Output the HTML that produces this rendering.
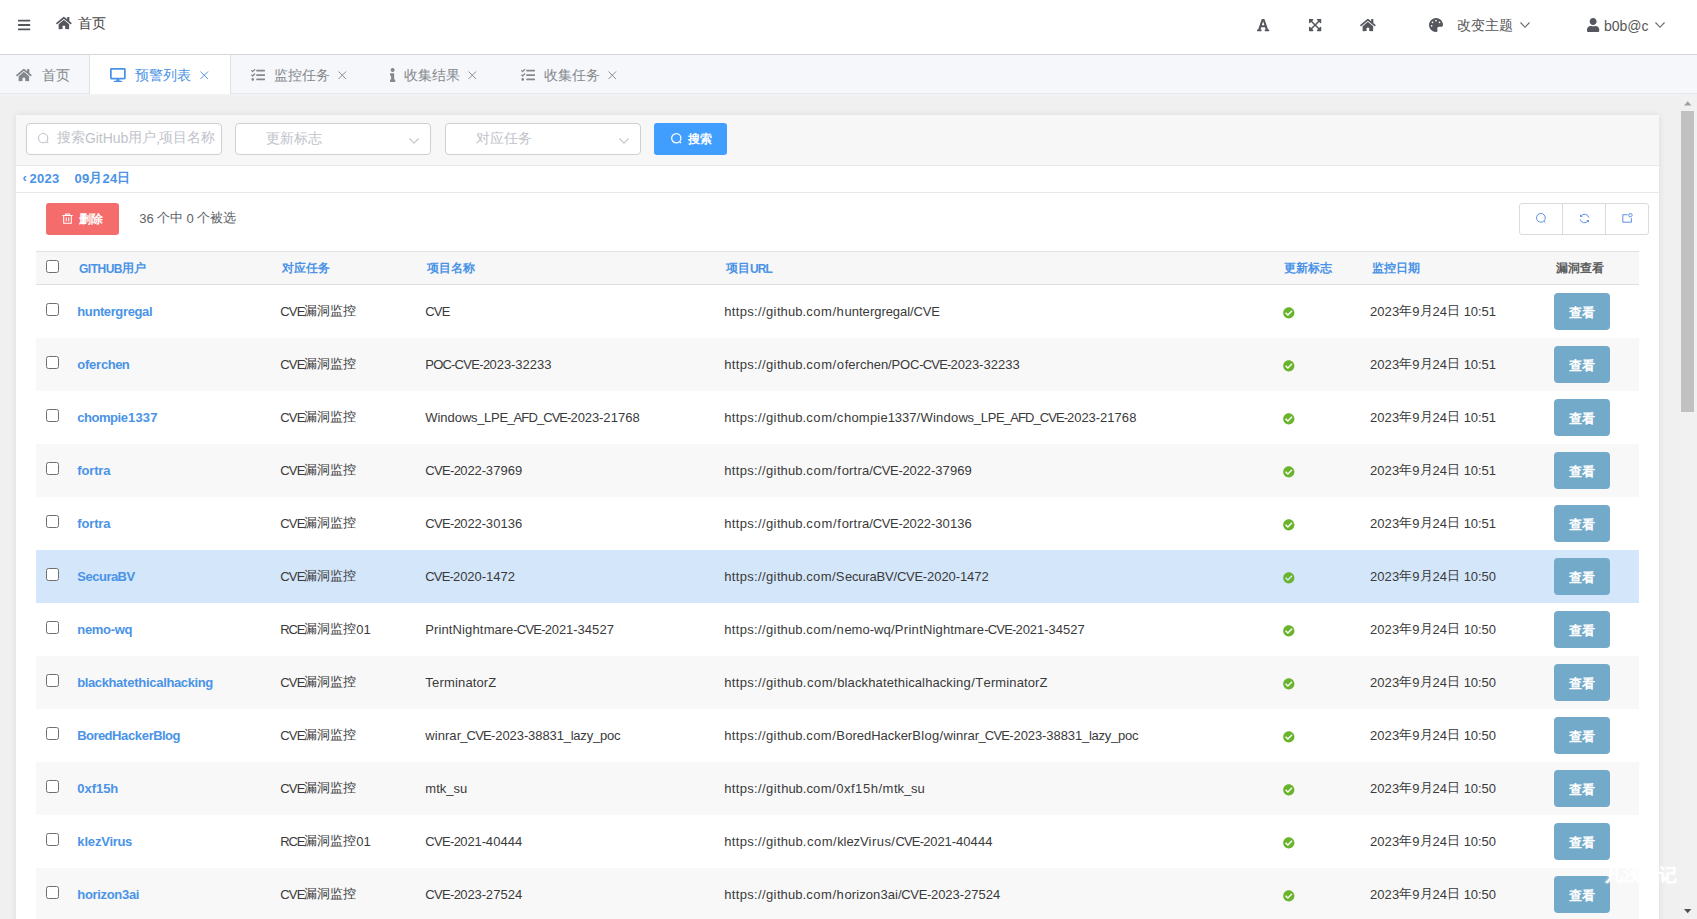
<!DOCTYPE html>
<html lang="zh">
<head>
<meta charset="utf-8">
<title>预警列表</title>
<style>
*{box-sizing:border-box;margin:0;padding:0}
html,body{width:1697px;height:919px;overflow:hidden}
body{font-family:"Liberation Sans",sans-serif;background:#f0f0f0;color:#333;position:relative;font-size:13px}
svg{display:block;overflow:visible}
.abs{position:absolute}
.t{position:absolute;line-height:16px;white-space:pre}
.t i{font-style:normal}
.t b{position:relative;top:-.85px;font-weight:inherit}
#hdr{position:absolute;left:0;top:0;width:1697px;height:55px;background:#fff;border-bottom:1px solid #d6d7da}
#tabs{position:absolute;left:0;top:55px;width:1697px;height:39px;background:#f5f7fa;border-bottom:1px solid #e4e7ed}
#tabs .act{position:absolute;left:89px;top:0;width:142px;height:39px;background:#fff;border-left:1px solid #dfe1e5;border-right:1px solid #dfe1e5}
#shade{position:absolute;left:0;top:94px;width:1680px;height:3px;background:linear-gradient(#f2f3f4,#f0f0f0)}
#sb{position:absolute;left:1680px;top:94px;width:17px;height:825px;background:#f1f1f1}
#sb .th{position:absolute;left:1px;top:17px;width:13px;height:301px;background:#c1c1c1}
#panel{position:absolute;left:16px;top:115px;width:1643px;height:820px;background:#fff;box-shadow:0 0 7px rgba(0,0,0,.09)}
#flt{position:absolute;left:16px;top:115px;width:1643px;height:51px;background:#f7f7f7;border-bottom:1px solid #e8e8e8}
.inp{position:absolute;top:123px;height:32px;width:196px;background:#fff;border:1px solid #cfcfcf;border-radius:4px}
#sbtn{position:absolute;left:654px;top:123px;width:73px;height:32px;border-radius:3px;background:#409eff}
#dline{position:absolute;left:16px;top:192px;width:1643px;height:1px;background:#e8e8e8}
#del{position:absolute;left:46px;top:203px;width:73px;height:32px;border-radius:3px;background:#f56c6c}
#grp{position:absolute;left:1519px;top:203px;width:130px;height:32px;border:1px solid #dbdbdb;border-radius:3px;background:#fff}
#grp i{position:absolute;top:0;width:1px;height:30px;background:#dbdbdb}
#th{position:absolute;left:36px;top:251px;width:1603px;height:34px;background:#f7f7f7;border-top:1px solid #e2e2e2;border-bottom:1px solid #dedede}
.rw{position:absolute;left:36px;width:1603px;height:53px}
.rw.odd{background:#f8f8f8}
.rw.sel{background:#d4e6f9}
.cb{position:absolute;left:46px;width:13px;height:13px;border:1px solid #6f6f6f;border-radius:2.5px;background:#fff}
.vb{position:absolute;left:1554px;width:56px;height:37px;border-radius:4px;background:#74aac9}
</style>
</head>
<body>
<div id="hdr"></div>
<div id="tabs"><div class="act"></div></div>
<div id="shade"></div>
<div id="panel"></div>
<div id="flt"></div>
<div class="inp" style="left:26px"></div><div class="inp" style="left:235px"></div><div class="inp" style="left:445px"></div>
<div id="sbtn"></div>
<div id="dline"></div>
<div id="del"></div>
<div id="grp"><i style="left:42px"></i><i style="left:85px"></i></div>
<div id="th"></div>
<div class="cb" style="top:260px"></div>
<div id="sb"><div class="th"></div></div>
<div class="rw" style="top:285px"></div>
<div class="cb" style="top:303px"></div>
<svg class="abs" style="left:1282.7px;top:306.7px" width="11.60" height="11.6" viewBox="0 0 512 512"><path fill="#6ab42d" d="M504 256c0 136.967-111.033 248-248 248S8 392.967 8 256 119.033 8 256 8s248 111.033 248 248zM227.314 387.314l184-184c6.248-6.248 6.248-16.379 0-22.627l-22.627-22.627c-6.248-6.249-16.379-6.249-22.628 0L216 308.118l-70.059-70.059c-6.248-6.248-16.379-6.248-22.628 0l-22.627 22.627c-6.248 6.248-6.248 16.379 0 22.627l104 104c6.249 6.249 16.379 6.249 22.628.001z"/></svg>
<div class="vb" style="top:293px"></div>
<div class="rw odd" style="top:338px"></div>
<div class="cb" style="top:356px"></div>
<svg class="abs" style="left:1282.7px;top:359.7px" width="11.60" height="11.6" viewBox="0 0 512 512"><path fill="#6ab42d" d="M504 256c0 136.967-111.033 248-248 248S8 392.967 8 256 119.033 8 256 8s248 111.033 248 248zM227.314 387.314l184-184c6.248-6.248 6.248-16.379 0-22.627l-22.627-22.627c-6.248-6.249-16.379-6.249-22.628 0L216 308.118l-70.059-70.059c-6.248-6.248-16.379-6.248-22.628 0l-22.627 22.627c-6.248 6.248-6.248 16.379 0 22.627l104 104c6.249 6.249 16.379 6.249 22.628.001z"/></svg>
<div class="vb" style="top:346px"></div>
<div class="rw" style="top:391px"></div>
<div class="cb" style="top:409px"></div>
<svg class="abs" style="left:1282.7px;top:412.7px" width="11.60" height="11.6" viewBox="0 0 512 512"><path fill="#6ab42d" d="M504 256c0 136.967-111.033 248-248 248S8 392.967 8 256 119.033 8 256 8s248 111.033 248 248zM227.314 387.314l184-184c6.248-6.248 6.248-16.379 0-22.627l-22.627-22.627c-6.248-6.249-16.379-6.249-22.628 0L216 308.118l-70.059-70.059c-6.248-6.248-16.379-6.248-22.628 0l-22.627 22.627c-6.248 6.248-6.248 16.379 0 22.627l104 104c6.249 6.249 16.379 6.249 22.628.001z"/></svg>
<div class="vb" style="top:399px"></div>
<div class="rw odd" style="top:444px"></div>
<div class="cb" style="top:462px"></div>
<svg class="abs" style="left:1282.7px;top:465.7px" width="11.60" height="11.6" viewBox="0 0 512 512"><path fill="#6ab42d" d="M504 256c0 136.967-111.033 248-248 248S8 392.967 8 256 119.033 8 256 8s248 111.033 248 248zM227.314 387.314l184-184c6.248-6.248 6.248-16.379 0-22.627l-22.627-22.627c-6.248-6.249-16.379-6.249-22.628 0L216 308.118l-70.059-70.059c-6.248-6.248-16.379-6.248-22.628 0l-22.627 22.627c-6.248 6.248-6.248 16.379 0 22.627l104 104c6.249 6.249 16.379 6.249 22.628.001z"/></svg>
<div class="vb" style="top:452px"></div>
<div class="rw" style="top:497px"></div>
<div class="cb" style="top:515px"></div>
<svg class="abs" style="left:1282.7px;top:518.7px" width="11.60" height="11.6" viewBox="0 0 512 512"><path fill="#6ab42d" d="M504 256c0 136.967-111.033 248-248 248S8 392.967 8 256 119.033 8 256 8s248 111.033 248 248zM227.314 387.314l184-184c6.248-6.248 6.248-16.379 0-22.627l-22.627-22.627c-6.248-6.249-16.379-6.249-22.628 0L216 308.118l-70.059-70.059c-6.248-6.248-16.379-6.248-22.628 0l-22.627 22.627c-6.248 6.248-6.248 16.379 0 22.627l104 104c6.249 6.249 16.379 6.249 22.628.001z"/></svg>
<div class="vb" style="top:505px"></div>
<div class="rw sel" style="top:550px"></div>
<div class="cb" style="top:568px"></div>
<svg class="abs" style="left:1282.7px;top:571.7px" width="11.60" height="11.6" viewBox="0 0 512 512"><path fill="#6ab42d" d="M504 256c0 136.967-111.033 248-248 248S8 392.967 8 256 119.033 8 256 8s248 111.033 248 248zM227.314 387.314l184-184c6.248-6.248 6.248-16.379 0-22.627l-22.627-22.627c-6.248-6.249-16.379-6.249-22.628 0L216 308.118l-70.059-70.059c-6.248-6.248-16.379-6.248-22.628 0l-22.627 22.627c-6.248 6.248-6.248 16.379 0 22.627l104 104c6.249 6.249 16.379 6.249 22.628.001z"/></svg>
<div class="vb" style="top:558px"></div>
<div class="rw" style="top:603px"></div>
<div class="cb" style="top:621px"></div>
<svg class="abs" style="left:1282.7px;top:624.7px" width="11.60" height="11.6" viewBox="0 0 512 512"><path fill="#6ab42d" d="M504 256c0 136.967-111.033 248-248 248S8 392.967 8 256 119.033 8 256 8s248 111.033 248 248zM227.314 387.314l184-184c6.248-6.248 6.248-16.379 0-22.627l-22.627-22.627c-6.248-6.249-16.379-6.249-22.628 0L216 308.118l-70.059-70.059c-6.248-6.248-16.379-6.248-22.628 0l-22.627 22.627c-6.248 6.248-6.248 16.379 0 22.627l104 104c6.249 6.249 16.379 6.249 22.628.001z"/></svg>
<div class="vb" style="top:611px"></div>
<div class="rw odd" style="top:656px"></div>
<div class="cb" style="top:674px"></div>
<svg class="abs" style="left:1282.7px;top:677.7px" width="11.60" height="11.6" viewBox="0 0 512 512"><path fill="#6ab42d" d="M504 256c0 136.967-111.033 248-248 248S8 392.967 8 256 119.033 8 256 8s248 111.033 248 248zM227.314 387.314l184-184c6.248-6.248 6.248-16.379 0-22.627l-22.627-22.627c-6.248-6.249-16.379-6.249-22.628 0L216 308.118l-70.059-70.059c-6.248-6.248-16.379-6.248-22.628 0l-22.627 22.627c-6.248 6.248-6.248 16.379 0 22.627l104 104c6.249 6.249 16.379 6.249 22.628.001z"/></svg>
<div class="vb" style="top:664px"></div>
<div class="rw" style="top:709px"></div>
<div class="cb" style="top:727px"></div>
<svg class="abs" style="left:1282.7px;top:730.7px" width="11.60" height="11.6" viewBox="0 0 512 512"><path fill="#6ab42d" d="M504 256c0 136.967-111.033 248-248 248S8 392.967 8 256 119.033 8 256 8s248 111.033 248 248zM227.314 387.314l184-184c6.248-6.248 6.248-16.379 0-22.627l-22.627-22.627c-6.248-6.249-16.379-6.249-22.628 0L216 308.118l-70.059-70.059c-6.248-6.248-16.379-6.248-22.628 0l-22.627 22.627c-6.248 6.248-6.248 16.379 0 22.627l104 104c6.249 6.249 16.379 6.249 22.628.001z"/></svg>
<div class="vb" style="top:717px"></div>
<div class="rw odd" style="top:762px"></div>
<div class="cb" style="top:780px"></div>
<svg class="abs" style="left:1282.7px;top:783.7px" width="11.60" height="11.6" viewBox="0 0 512 512"><path fill="#6ab42d" d="M504 256c0 136.967-111.033 248-248 248S8 392.967 8 256 119.033 8 256 8s248 111.033 248 248zM227.314 387.314l184-184c6.248-6.248 6.248-16.379 0-22.627l-22.627-22.627c-6.248-6.249-16.379-6.249-22.628 0L216 308.118l-70.059-70.059c-6.248-6.248-16.379-6.248-22.628 0l-22.627 22.627c-6.248 6.248-6.248 16.379 0 22.627l104 104c6.249 6.249 16.379 6.249 22.628.001z"/></svg>
<div class="vb" style="top:770px"></div>
<div class="rw" style="top:815px"></div>
<div class="cb" style="top:833px"></div>
<svg class="abs" style="left:1282.7px;top:836.7px" width="11.60" height="11.6" viewBox="0 0 512 512"><path fill="#6ab42d" d="M504 256c0 136.967-111.033 248-248 248S8 392.967 8 256 119.033 8 256 8s248 111.033 248 248zM227.314 387.314l184-184c6.248-6.248 6.248-16.379 0-22.627l-22.627-22.627c-6.248-6.249-16.379-6.249-22.628 0L216 308.118l-70.059-70.059c-6.248-6.248-16.379-6.248-22.628 0l-22.627 22.627c-6.248 6.248-6.248 16.379 0 22.627l104 104c6.249 6.249 16.379 6.249 22.628.001z"/></svg>
<div class="vb" style="top:823px"></div>
<div class="rw odd" style="top:868px"></div>
<div class="cb" style="top:886px"></div>
<svg class="abs" style="left:1282.7px;top:889.7px" width="11.60" height="11.6" viewBox="0 0 512 512"><path fill="#6ab42d" d="M504 256c0 136.967-111.033 248-248 248S8 392.967 8 256 119.033 8 256 8s248 111.033 248 248zM227.314 387.314l184-184c6.248-6.248 6.248-16.379 0-22.627l-22.627-22.627c-6.248-6.249-16.379-6.249-22.628 0L216 308.118l-70.059-70.059c-6.248-6.248-16.379-6.248-22.628 0l-22.627 22.627c-6.248 6.248-6.248 16.379 0 22.627l104 104c6.249 6.249 16.379 6.249 22.628.001z"/></svg>
<div class="vb" style="top:876px"></div>
<svg class="abs" style="left:17.8px;top:18px" width="12.25" height="14" viewBox="0 0 448 512"><path fill="#54575d" d="M16 132h416c8.837 0 16-7.163 16-16V76c0-8.837-7.163-16-16-16H16C7.163 60 0 67.163 0 76v40c0 8.837 7.163 16 16 16zm0 160h416c8.837 0 16-7.163 16-16v-40c0-8.837-7.163-16-16-16H16c-8.837 0-16 7.163-16 16v40c0 8.837 7.163 16 16 16zm0 160h416c8.837 0 16-7.163 16-16v-40c0-8.837-7.163-16-16-16H16c-8.837 0-16 7.163-16 16v40c0 8.837 7.163 16 16 16z"/></svg>
<svg class="abs" style="left:56.2px;top:15.5px" width="15.75" height="14" viewBox="0 0 576 512"><path fill="#54575d" d="M280.37 148.26L96 300.11V464a16 16 0 0 0 16 16l112.06-.29a16 16 0 0 0 15.92-16V368a16 16 0 0 1 16-16h64a16 16 0 0 1 16 16v95.64a16 16 0 0 0 16 16.05L464 480a16 16 0 0 0 16-16V300L295.67 148.26a12.19 12.19 0 0 0-15.3 0zM571.6 251.47L488 182.56V44.05a12 12 0 0 0-12-12h-56a12 12 0 0 0-12 12v72.61L318.47 43a48 48 0 0 0-61 0L4.34 251.47a12 12 0 0 0-1.6 16.9l25.5 31A12 12 0 0 0 45.15 301l235.22-193.74a12.19 12.19 0 0 1 15.3 0L530.9 301a12 12 0 0 0 16.9-1.6l25.5-31a12 12 0 0 0-1.7-16.93z"/></svg>
<svg class="abs" style="left:1257.4px;top:18px" width="12.25" height="14" viewBox="0 0 448 512"><path fill="#54575d" d="M152 416h-24.013l26.586-80.782H292.800L319.386 416H296c-8.837 0-16 7.163-16 16v32c0 8.837 7.163 16 16 16h136c8.837 0 16-7.163 16-16v-32c0-8.837-7.163-16-16-16h-26.739L275.495 42.746A16 16 0 0 0 260.382 32h-72.766a16 16 0 0 0-15.113 10.746L42.739 416H16c-8.837 0-16 7.163-16 16v32c0 8.837 7.163 16 16 16h136c8.837 0 16-7.163 16-16v-32c0-8.837-7.163-16-16-16zm64.353-271.778c4.348-15.216 6.610-28.156 7.586-34.644.839 6.521 2.939 19.476 7.727 34.706l41.335 124.006h-98.619l41.971-124.068z"/></svg>
<svg class="abs" style="left:1309px;top:18px" width="12.25" height="14" viewBox="0 0 448 512"><path fill="#54575d" d="M448 344v112a23.940 23.940 0 0 1-24 24H312c-21.390 0-32.090-25.900-17-41l36.200-36.200L224 295.600 116.770 402.900 153 439c15.090 15.100 4.390 41-17 41H24a23.940 23.940 0 0 1-24-24V344c0-21.400 25.890-32.100 41-17l36.190 36.200L184.460 256 77.180 148.700 41 185c-15.100 15.100-41 4.400-41-17V56a23.940 23.940 0 0 1 24-24h112c21.390 0 32.090 25.900 17 41l-36.200 36.200L224 216.400l107.230-107.300L295 73c-15.090-15.100-4.390-41 17-41h112a23.940 23.940 0 0 1 24 24v112c0 21.400-25.890 32.100-41 17l-36.190-36.200L263.540 256l107.280 107.300L407 327.100c15.100-15.200 41-4.500 41 16.900z"/></svg>
<svg class="abs" style="left:1359.7px;top:18px" width="15.75" height="14" viewBox="0 0 576 512"><path fill="#54575d" d="M280.37 148.26L96 300.11V464a16 16 0 0 0 16 16l112.06-.29a16 16 0 0 0 15.92-16V368a16 16 0 0 1 16-16h64a16 16 0 0 1 16 16v95.64a16 16 0 0 0 16 16.05L464 480a16 16 0 0 0 16-16V300L295.67 148.26a12.19 12.19 0 0 0-15.3 0zM571.6 251.47L488 182.56V44.05a12 12 0 0 0-12-12h-56a12 12 0 0 0-12 12v72.61L318.47 43a48 48 0 0 0-61 0L4.34 251.47a12 12 0 0 0-1.6 16.9l25.5 31A12 12 0 0 0 45.15 301l235.22-193.74a12.19 12.19 0 0 1 15.3 0L530.9 301a12 12 0 0 0 16.9-1.6l25.5-31a12 12 0 0 0-1.7-16.93z"/></svg>
<svg class="abs" style="left:1429px;top:18px" width="14.00" height="14" viewBox="0 0 512 512"><path fill="#54575d" d="M204.3 5C104.9 24.4 24.8 104.3 5.2 203.4c-37 187 131.7 326.4 258.8 306.7 41.2-6.4 61.4-54.6 42.5-91.7-23.1-45.4 9.9-98.4 60.9-98.4h79.700c35.800 0 64.800-29.600 64.900-65.300C511.500 97.100 368.100-26.900 204.300 5zM96 320c-17.700 0-32-14.300-32-32s14.300-32 32-32 32 14.300 32 32-14.300 32-32 32zm32-128c-17.700 0-32-14.300-32-32s14.300-32 32-32 32 14.300 32 32-14.300 32-32 32zm128-64c-17.700 0-32-14.300-32-32s14.300-32 32-32 32 14.300 32 32-14.300 32-32 32zm128 64c-17.700 0-32-14.300-32-32s14.300-32 32-32 32 14.300 32 32-14.300 32-32 32z"/></svg>
<svg class="abs" style="left:1586.7px;top:18px" width="12.25" height="14" viewBox="0 0 448 512"><path fill="#54575d" d="M224 256c70.7 0 128-57.3 128-128S294.7 0 224 0 96 57.3 96 128s57.3 128 128 128zm89.6 32h-16.7c-22.2 10.2-46.9 16-72.9 16s-50.6-5.8-72.9-16h-16.7C60.2 288 0 348.2 0 422.4V464c0 26.5 21.5 48 48 48h352c26.5 0 48-21.5 48-48v-41.6c0-74.2-60.2-134.4-134.4-134.4z"/></svg>
<svg class="abs" style="left:1520.3px;top:22px" width="10" height="6" viewBox="0 0 10 6"><path d="M0.5 0.5L5.0 5.3L9.5 0.5" fill="none" stroke="#666" stroke-width="1.1"/></svg>
<svg class="abs" style="left:1655.2px;top:22px" width="10" height="6" viewBox="0 0 10 6"><path d="M0.5 0.5L5.0 5.3L9.5 0.5" fill="none" stroke="#666" stroke-width="1.1"/></svg>
<svg class="abs" style="left:16.2px;top:67.8px" width="15.75" height="14" viewBox="0 0 576 512"><path fill="#84878c" d="M280.37 148.26L96 300.11V464a16 16 0 0 0 16 16l112.06-.29a16 16 0 0 0 15.92-16V368a16 16 0 0 1 16-16h64a16 16 0 0 1 16 16v95.64a16 16 0 0 0 16 16.05L464 480a16 16 0 0 0 16-16V300L295.67 148.26a12.19 12.19 0 0 0-15.3 0zM571.6 251.47L488 182.56V44.05a12 12 0 0 0-12-12h-56a12 12 0 0 0-12 12v72.61L318.47 43a48 48 0 0 0-61 0L4.34 251.47a12 12 0 0 0-1.6 16.9l25.5 31A12 12 0 0 0 45.15 301l235.22-193.74a12.19 12.19 0 0 1 15.3 0L530.9 301a12 12 0 0 0 16.9-1.6l25.5-31a12 12 0 0 0-1.7-16.93z"/></svg>
<svg class="abs" style="left:110.2px;top:67.8px" width="15.75" height="14" viewBox="0 0 576 512"><path fill="#4a93e6" d="M528 0H48C21.5 0 0 21.5 0 48v320c0 26.5 21.5 48 48 48h192l-16 48h-72c-13.3 0-24 10.7-24 24s10.7 24 24 24h272c13.3 0 24-10.7 24-24s-10.7-24-24-24h-72l-16-48h192c26.5 0 48-21.5 48-48V48c0-26.5-21.5-48-48-48zm-16 352H64V64h448v288z"/></svg>
<svg class="abs" style="left:199.5px;top:70.5px" width="8.5" height="8.5" viewBox="0 0 8.5 8.5"><path d="M0.5 0.5L8.0 8.0M8.0 0.5L0.5 8.0" fill="none" stroke="#4a93e6" stroke-width="0.95"/></svg>
<svg class="abs" style="left:251px;top:67.8px" width="14.00" height="14" viewBox="0 0 512 512"><path fill="#84878c" d="M139.61 35.5a12 12 0 0 0-17 0L58.930 98.810l-22.700-22.120a12 12 0 0 0-17 0L3.530 92.410a12 12 0 0 0 0 17l47.590 47.400a12.780 12.780 0 0 0 17.610 0l15.590-15.620L156.520 69a12.090 12.090 0 0 0 .09-17zm0 159.190a12 12 0 0 0-17 0l-63.680 63.720-22.700-22.100a12 12 0 0 0-17 0L3.530 252a12 12 0 0 0 0 17L51 316.500a12.770 12.770 0 0 0 17.600 0l15.700-15.690 72.200-72.220a12 12 0 0 0 .09-16.900zM64 368c-26.490 0-48.590 21.500-48.590 48S37.530 464 64 464a48 48 0 0 0 0-96zm432 16H208a16 16 0 0 0-16 16v32a16 16 0 0 0 16 16h288a16 16 0 0 0 16-16v-32a16 16 0 0 0-16-16zm0-320H208a16 16 0 0 0-16 16v32a16 16 0 0 0 16 16h288a16 16 0 0 0 16-16V80a16 16 0 0 0-16-16zm0 160H208a16 16 0 0 0-16 16v32a16 16 0 0 0 16 16h288a16 16 0 0 0 16-16v-32a16 16 0 0 0-16-16z"/></svg>
<svg class="abs" style="left:337.5px;top:70.5px" width="8.5" height="8.5" viewBox="0 0 8.5 8.5"><path d="M0.5 0.5L8.0 8.0M8.0 0.5L0.5 8.0" fill="none" stroke="#84878c" stroke-width="0.95"/></svg>
<svg class="abs" style="left:389.5px;top:67.8px" width="5.25" height="14" viewBox="0 0 192 512"><path fill="#84878c" d="M20 424.229h20V279.771H20c-11.046 0-20-8.954-20-20V212c0-11.046 8.954-20 20-20h112c11.046 0 20 8.954 20 20v212.229h20c11.046 0 20 8.954 20 20V492c0 11.046-8.954 20-20 20H20c-11.046 0-20-8.954-20-20v-47.771c0-11.046 8.954-20 20-20zM96 0C56.235 0 24 32.235 24 72s32.235 72 72 72 72-32.235 72-72S135.764 0 96 0z"/></svg>
<svg class="abs" style="left:467.5px;top:70.5px" width="8.5" height="8.5" viewBox="0 0 8.5 8.5"><path d="M0.5 0.5L8.0 8.0M8.0 0.5L0.5 8.0" fill="none" stroke="#84878c" stroke-width="0.95"/></svg>
<svg class="abs" style="left:520.5px;top:67.8px" width="14.00" height="14" viewBox="0 0 512 512"><path fill="#84878c" d="M139.61 35.5a12 12 0 0 0-17 0L58.930 98.810l-22.700-22.120a12 12 0 0 0-17 0L3.530 92.410a12 12 0 0 0 0 17l47.590 47.400a12.780 12.780 0 0 0 17.610 0l15.590-15.620L156.520 69a12.090 12.090 0 0 0 .09-17zm0 159.190a12 12 0 0 0-17 0l-63.680 63.720-22.700-22.100a12 12 0 0 0-17 0L3.530 252a12 12 0 0 0 0 17L51 316.500a12.770 12.770 0 0 0 17.600 0l15.700-15.690 72.200-72.220a12 12 0 0 0 .09-16.900zM64 368c-26.490 0-48.590 21.500-48.590 48S37.530 464 64 464a48 48 0 0 0 0-96zm432 16H208a16 16 0 0 0-16 16v32a16 16 0 0 0 16 16h288a16 16 0 0 0 16-16v-32a16 16 0 0 0-16-16zm0-320H208a16 16 0 0 0-16 16v32a16 16 0 0 0 16 16h288a16 16 0 0 0 16-16V80a16 16 0 0 0-16-16zm0 160H208a16 16 0 0 0-16 16v32a16 16 0 0 0 16 16h288a16 16 0 0 0 16-16v-32a16 16 0 0 0-16-16z"/></svg>
<svg class="abs" style="left:607.5px;top:70.5px" width="8.5" height="8.5" viewBox="0 0 8.5 8.5"><path d="M0.5 0.5L8.0 8.0M8.0 0.5L0.5 8.0" fill="none" stroke="#84878c" stroke-width="0.95"/></svg>
<svg class="abs" style="left:37.5px;top:132.5px" width="12" height="12" viewBox="0 0 12 12"><circle cx="5.17" cy="5.17" r="4.62" fill="none" stroke="#bfc3ca" stroke-width="1.1"/><path d="M8.4964 8.4964L10.1 10.1" stroke="#bfc3ca" stroke-width="1.1" fill="none"/></svg>
<svg class="abs" style="left:408.5px;top:137.9px" width="10" height="6" viewBox="0 0 10 6"><path d="M0.5 0.5L5.0 5.3L9.5 0.5" fill="none" stroke="#bfc3ca" stroke-width="1.1"/></svg>
<svg class="abs" style="left:618.5px;top:137.9px" width="10" height="6" viewBox="0 0 10 6"><path d="M0.5 0.5L5.0 5.3L9.5 0.5" fill="none" stroke="#bfc3ca" stroke-width="1.1"/></svg>
<svg class="abs" style="left:671px;top:132.5px" width="12" height="12" viewBox="0 0 12 12"><circle cx="5.2700000000000005" cy="5.2700000000000005" r="4.62" fill="none" stroke="#fff" stroke-width="1.3"/><path d="M8.596400000000001 8.596400000000001L10.1 10.1" stroke="#fff" stroke-width="1.3" fill="none"/></svg>
<svg class="abs" style="left:62.3px;top:213px" width="11" height="11" viewBox="0 0 11 11"><path d="M0.3 2.5H10.7M3.7 2.3V0.9H7.3V2.3M1.7 2.7V10.2H9.3V2.7M4.3 4.6V8.3M6.7 4.6V8.3" fill="none" stroke="#fff" stroke-width="1.05"/></svg>
<svg class="abs" style="left:1535.7px;top:213px" width="11.4" height="11.4" viewBox="0 0 11.4 11.4"><circle cx="4.868" cy="4.868" r="4.368" fill="none" stroke="#5b8fe2" stroke-width="1.0"/><path d="M8.01296 8.01296L9.5 9.5" stroke="#5b8fe2" stroke-width="1.0" fill="none"/></svg>
<svg class="abs" style="left:1579px;top:213px" width="11" height="11" viewBox="0 0 11 11"><g transform="translate(11,0) scale(-1,1)"><path d="M1.2 4.6A4.3 4.3 0 0 1 9 3.2M9.8 6.4A4.3 4.3 0 0 1 2 7.8" fill="none" stroke="#5b8fe2" stroke-width="1"/><path d="M9.9 1.2V3.9H7.2zM1.1 9.8V7.1H3.8z" fill="#5b8fe2"/></g></svg>
<svg class="abs" style="left:1622px;top:212.3px" width="11" height="11" viewBox="0 0 11 11"><path d="M5.6 2.7H0.8V10.2H9.4V6.2" fill="none" stroke="#5b8fe2" stroke-width="1" stroke-linejoin="round"/><circle cx="8.4" cy="3.2" r="1.75" fill="none" stroke="#5b8fe2" stroke-width="1"/></svg>
<svg class="abs" style="left:1683.7px;top:100.5px;z-index:5" width="7.4" height="4.5" viewBox="0 0 7.4 4.5"><path d="M0 4.5L3.7 0.3L7.4 4.5z" fill="#a0a0a0"/></svg>
<svg class="abs" style="left:1683.8px;top:908.8px;z-index:5" width="7.4" height="4.5" viewBox="0 0 7.4 4.5"><path d="M0 0L3.7 4.2L7.4 0z" fill="#505050"/></svg>
<span class="t" style="left:78.0px;top:14.7px;font-size:14px;color:#444">首页</span>
<span class="t" style="left:1457.0px;top:16.5px;font-size:14px;color:#555">改变主题</span>
<span class="t" style="left:1604.0px;top:17.5px;font-size:14px;color:#555">b0b@c</span>
<span class="t" style="left:42.0px;top:67.1px;font-size:14px;color:#84878c">首页</span>
<span class="t" style="left:135.0px;top:67.1px;font-size:14px;color:#4a93e6">预警列表</span>
<span class="t" style="left:274.0px;top:67.1px;font-size:14px;color:#84878c">监控任务</span>
<span class="t" style="left:404.0px;top:67.1px;font-size:14px;color:#84878c">收集结果</span>
<span class="t" style="left:544.0px;top:67.1px;font-size:14px;color:#84878c">收集任务</span>
<span class="t" style="left:57.0px;top:129.5px;font-size:14px;color:#bfc3ca"><b>搜索</b><i style="letter-spacing:-0.08px">GitHub</i><b>用户</b><i style="letter-spacing:-1.12px">,</i><b>项目名称</b></span>
<span class="t" style="left:266.0px;top:129.5px;font-size:14px;color:#bfc3ca">更新标志</span>
<span class="t" style="left:476.0px;top:129.5px;font-size:14px;color:#bfc3ca">对应任务</span>
<span class="t" style="left:688.0px;top:130.8px;font-size:12px;color:#fff;font-weight:700">搜索</span>
<span class="t" style="left:22.5px;top:170.0px;font-size:13px;color:#4a93e6;font-weight:700">‹</span>
<span class="t" style="left:29.5px;top:170.5px;font-size:13px;color:#4a93e6;font-weight:700;letter-spacing:0.23px">2023</span>
<span class="t" style="left:74.5px;top:170.5px;font-size:13px;color:#4a93e6;font-weight:700"><i style="letter-spacing:0.23px">09</i><b>月</b><i style="letter-spacing:0.23px">24</i><b>日</b></span>
<span class="t" style="left:79.0px;top:210.8px;font-size:12px;color:#fff;font-weight:700">删除</span>
<span class="t" style="left:139.3px;top:210.5px;font-size:13px;color:#5c5f66"><i style="letter-spacing:-0.08px">36 </i><b>个中</b><i style="letter-spacing:-0.23px"> 0 </i><b>个被选</b></span>
<span class="t" style="left:79.0px;top:261.0px;font-size:12px;color:#4a93e6;font-weight:700"><i style="letter-spacing:-0.50px">GITHUB</i><b>用户</b></span>
<span class="t" style="left:282.0px;top:260.1px;font-size:12px;color:#4a93e6;font-weight:700">对应任务</span>
<span class="t" style="left:427.0px;top:260.1px;font-size:12px;color:#4a93e6;font-weight:700">项目名称</span>
<span class="t" style="left:726.0px;top:261.0px;font-size:12px;color:#4a93e6;font-weight:700"><b>项目</b><i style="letter-spacing:-0.86px">URL</i></span>
<span class="t" style="left:1284.0px;top:260.1px;font-size:12px;color:#4a93e6;font-weight:700">更新标志</span>
<span class="t" style="left:1372.0px;top:260.1px;font-size:12px;color:#4a93e6;font-weight:700">监控日期</span>
<span class="t" style="left:1556.0px;top:260.1px;font-size:12px;color:#5c5c5c;font-weight:700">漏洞查看</span>
<span class="t" style="left:77.3px;top:304.1px;font-size:13px;color:#4a93e6;font-weight:700"><i style="letter-spacing:-0.40px">hunter</i><i style="letter-spacing:-0.35px">gregal</i></span>
<span class="t" style="left:280.3px;top:304.1px;font-size:13px;color:#3a3a3a"><i style="letter-spacing:-0.86px">CVE</i><b>漏洞监控</b></span>
<span class="t" style="left:425.3px;top:304.1px;font-size:13px;color:#3a3a3a;letter-spacing:-0.86px">CVE</span>
<span class="t" style="left:724.3px;top:304.1px;font-size:13px;color:#3a3a3a"><i style="letter-spacing:0.30px">https</i><i style="letter-spacing:0.39px">://gi</i><i style="letter-spacing:0.08px">thub.</i><i style="letter-spacing:0.55px">com/h</i><i style="letter-spacing:0.05px">unter</i><i style="letter-spacing:-0.08px">grega</i><i style="letter-spacing:-0.12px">l/CVE</i></span>
<span class="t" style="left:1370.0px;top:304.1px;font-size:13px;color:#3a3a3a"><i style="letter-spacing:0.08px">2023</i><b>年</b><i style="letter-spacing:0.08px">9</i><b>月</b><i style="letter-spacing:0.08px">24</i><b>日</b><i style="letter-spacing:-0.09px"> 10:51</i></span>
<span class="t" style="left:1568.5px;top:304.5px;font-size:13px;color:#fff;font-weight:700">查看</span>
<span class="t" style="left:77.3px;top:357.1px;font-size:13px;color:#4a93e6;font-weight:700"><i style="letter-spacing:-0.23px">ofer</i><i style="letter-spacing:-0.49px">chen</i></span>
<span class="t" style="left:280.3px;top:357.1px;font-size:13px;color:#3a3a3a"><i style="letter-spacing:-0.86px">CVE</i><b>漏洞监控</b></span>
<span class="t" style="left:425.3px;top:357.1px;font-size:13px;color:#3a3a3a"><i style="letter-spacing:-0.82px">POC-</i><i style="letter-spacing:-0.65px">CVE-2</i><i style="letter-spacing:-0.08px">023-3</i><i style="letter-spacing:0.08px">2233</i></span>
<span class="t" style="left:724.3px;top:357.1px;font-size:13px;color:#3a3a3a"><i style="letter-spacing:0.30px">https</i><i style="letter-spacing:0.39px">://gi</i><i style="letter-spacing:0.08px">thub.</i><i style="letter-spacing:0.60px">com/o</i><i style="letter-spacing:0.04px">ferche</i><i style="letter-spacing:-0.17px">n/POC</i><i style="letter-spacing:-0.81px">-CVE-</i><i style="letter-spacing:-0.08px">2023-</i><i style="letter-spacing:0.07px">32233</i></span>
<span class="t" style="left:1370.0px;top:357.1px;font-size:13px;color:#3a3a3a"><i style="letter-spacing:0.08px">2023</i><b>年</b><i style="letter-spacing:0.08px">9</i><b>月</b><i style="letter-spacing:0.08px">24</i><b>日</b><i style="letter-spacing:-0.09px"> 10:51</i></span>
<span class="t" style="left:1568.5px;top:357.5px;font-size:13px;color:#fff;font-weight:700">查看</span>
<span class="t" style="left:77.3px;top:410.1px;font-size:13px;color:#4a93e6;font-weight:700"><i style="letter-spacing:-0.47px">chompi</i><i style="letter-spacing:0.14px">e1337</i></span>
<span class="t" style="left:280.3px;top:410.1px;font-size:13px;color:#3a3a3a"><i style="letter-spacing:-0.86px">CVE</i><b>漏洞监控</b></span>
<span class="t" style="left:425.3px;top:410.1px;font-size:13px;color:#3a3a3a"><i style="letter-spacing:-0.05px">Windo</i><i style="letter-spacing:-0.30px">ws_LP</i><i style="letter-spacing:-0.89px">E_AFD</i><i style="letter-spacing:-0.94px">_CVE-</i><i style="letter-spacing:-0.08px">2023-</i><i style="letter-spacing:0.07px">21768</i></span>
<span class="t" style="left:724.3px;top:410.1px;font-size:13px;color:#3a3a3a"><i style="letter-spacing:0.30px">https</i><i style="letter-spacing:0.39px">://gi</i><i style="letter-spacing:0.08px">thub.</i><i style="letter-spacing:0.62px">com/c</i><i style="letter-spacing:0.20px">hompi</i><i style="letter-spacing:-0.01px">e1337</i><i style="letter-spacing:0.25px">/Windo</i><i style="letter-spacing:-0.30px">ws_LP</i><i style="letter-spacing:-0.89px">E_AFD</i><i style="letter-spacing:-0.94px">_CVE-</i><i style="letter-spacing:-0.08px">2023-</i><i style="letter-spacing:0.07px">21768</i></span>
<span class="t" style="left:1370.0px;top:410.1px;font-size:13px;color:#3a3a3a"><i style="letter-spacing:0.08px">2023</i><b>年</b><i style="letter-spacing:0.08px">9</i><b>月</b><i style="letter-spacing:0.08px">24</i><b>日</b><i style="letter-spacing:-0.09px"> 10:51</i></span>
<span class="t" style="left:1568.5px;top:410.5px;font-size:13px;color:#fff;font-weight:700">查看</span>
<span class="t" style="left:77.3px;top:463.1px;font-size:13px;color:#4a93e6;font-weight:700;letter-spacing:-0.16px">fortra</span>
<span class="t" style="left:280.3px;top:463.1px;font-size:13px;color:#3a3a3a"><i style="letter-spacing:-0.86px">CVE</i><b>漏洞监控</b></span>
<span class="t" style="left:425.3px;top:463.1px;font-size:13px;color:#3a3a3a"><i style="letter-spacing:-0.65px">CVE-2</i><i style="letter-spacing:-0.13px">022-</i><i style="letter-spacing:0.07px">37969</i></span>
<span class="t" style="left:724.3px;top:463.1px;font-size:13px;color:#3a3a3a"><i style="letter-spacing:0.30px">https</i><i style="letter-spacing:0.39px">://gi</i><i style="letter-spacing:0.08px">thub.</i><i style="letter-spacing:0.74px">com/f</i><i style="letter-spacing:0.18px">ortra</i><i style="letter-spacing:-0.32px">/CVE-</i><i style="letter-spacing:-0.08px">2022-</i><i style="letter-spacing:0.07px">37969</i></span>
<span class="t" style="left:1370.0px;top:463.1px;font-size:13px;color:#3a3a3a"><i style="letter-spacing:0.08px">2023</i><b>年</b><i style="letter-spacing:0.08px">9</i><b>月</b><i style="letter-spacing:0.08px">24</i><b>日</b><i style="letter-spacing:-0.09px"> 10:51</i></span>
<span class="t" style="left:1568.5px;top:463.5px;font-size:13px;color:#fff;font-weight:700">查看</span>
<span class="t" style="left:77.3px;top:516.1px;font-size:13px;color:#4a93e6;font-weight:700;letter-spacing:-0.16px">fortra</span>
<span class="t" style="left:280.3px;top:516.1px;font-size:13px;color:#3a3a3a"><i style="letter-spacing:-0.86px">CVE</i><b>漏洞监控</b></span>
<span class="t" style="left:425.3px;top:516.1px;font-size:13px;color:#3a3a3a"><i style="letter-spacing:-0.65px">CVE-2</i><i style="letter-spacing:-0.13px">022-</i><i style="letter-spacing:0.07px">30136</i></span>
<span class="t" style="left:724.3px;top:516.1px;font-size:13px;color:#3a3a3a"><i style="letter-spacing:0.30px">https</i><i style="letter-spacing:0.39px">://gi</i><i style="letter-spacing:0.08px">thub.</i><i style="letter-spacing:0.74px">com/f</i><i style="letter-spacing:0.18px">ortra</i><i style="letter-spacing:-0.32px">/CVE-</i><i style="letter-spacing:-0.08px">2022-</i><i style="letter-spacing:0.07px">30136</i></span>
<span class="t" style="left:1370.0px;top:516.1px;font-size:13px;color:#3a3a3a"><i style="letter-spacing:0.08px">2023</i><b>年</b><i style="letter-spacing:0.08px">9</i><b>月</b><i style="letter-spacing:0.08px">24</i><b>日</b><i style="letter-spacing:-0.09px"> 10:51</i></span>
<span class="t" style="left:1568.5px;top:516.5px;font-size:13px;color:#fff;font-weight:700">查看</span>
<span class="t" style="left:77.3px;top:569.1px;font-size:13px;color:#4a93e6;font-weight:700"><i style="letter-spacing:-0.50px">Secu</i><i style="letter-spacing:-0.55px">raBV</i></span>
<span class="t" style="left:280.3px;top:569.1px;font-size:13px;color:#3a3a3a"><i style="letter-spacing:-0.86px">CVE</i><b>漏洞监控</b></span>
<span class="t" style="left:425.3px;top:569.1px;font-size:13px;color:#3a3a3a"><i style="letter-spacing:-0.83px">CVE-</i><i style="letter-spacing:-0.08px">2020-</i><i style="letter-spacing:0.08px">1472</i></span>
<span class="t" style="left:724.3px;top:569.1px;font-size:13px;color:#3a3a3a"><i style="letter-spacing:0.30px">https</i><i style="letter-spacing:0.39px">://gi</i><i style="letter-spacing:0.08px">thub.</i><i style="letter-spacing:0.37px">com/S</i><i style="letter-spacing:-0.17px">ecuraB</i><i style="letter-spacing:-0.25px">V/CVE</i><i style="letter-spacing:-0.08px">-2020</i><i style="letter-spacing:-0.08px">-1472</i></span>
<span class="t" style="left:1370.0px;top:569.1px;font-size:13px;color:#3a3a3a"><i style="letter-spacing:0.08px">2023</i><b>年</b><i style="letter-spacing:0.08px">9</i><b>月</b><i style="letter-spacing:0.08px">24</i><b>日</b><i style="letter-spacing:-0.09px"> 10:50</i></span>
<span class="t" style="left:1568.5px;top:569.5px;font-size:13px;color:#fff;font-weight:700">查看</span>
<span class="t" style="left:77.3px;top:622.1px;font-size:13px;color:#4a93e6;font-weight:700;letter-spacing:-0.31px">nemo-wq</span>
<span class="t" style="left:280.3px;top:622.1px;font-size:13px;color:#3a3a3a"><i style="letter-spacing:-1.19px">RCE</i><b>漏洞监控</b><i style="letter-spacing:0.08px">01</i></span>
<span class="t" style="left:425.3px;top:622.1px;font-size:13px;color:#3a3a3a"><i style="letter-spacing:0.09px">Print</i><i style="letter-spacing:0.16px">Night</i><i style="letter-spacing:0.01px">mare</i><i style="letter-spacing:-0.81px">-CVE-</i><i style="letter-spacing:-0.08px">2021-</i><i style="letter-spacing:0.07px">34527</i></span>
<span class="t" style="left:724.3px;top:622.1px;font-size:13px;color:#3a3a3a"><i style="letter-spacing:0.30px">https</i><i style="letter-spacing:0.39px">://gi</i><i style="letter-spacing:0.08px">thub.</i><i style="letter-spacing:0.55px">com/n</i><i style="letter-spacing:0.01px">emo-w</i><i style="letter-spacing:0.29px">q/Prin</i><i style="letter-spacing:0.16px">tNigh</i><i style="letter-spacing:0.13px">tmare</i><i style="letter-spacing:-0.81px">-CVE-</i><i style="letter-spacing:-0.08px">2021-</i><i style="letter-spacing:0.07px">34527</i></span>
<span class="t" style="left:1370.0px;top:622.1px;font-size:13px;color:#3a3a3a"><i style="letter-spacing:0.08px">2023</i><b>年</b><i style="letter-spacing:0.08px">9</i><b>月</b><i style="letter-spacing:0.08px">24</i><b>日</b><i style="letter-spacing:-0.09px"> 10:50</i></span>
<span class="t" style="left:1568.5px;top:622.5px;font-size:13px;color:#fff;font-weight:700">查看</span>
<span class="t" style="left:77.3px;top:675.1px;font-size:13px;color:#4a93e6;font-weight:700"><i style="letter-spacing:-0.41px">blackh</i><i style="letter-spacing:-0.20px">ateth</i><i style="letter-spacing:-0.34px">icalh</i><i style="letter-spacing:-0.39px">acking</i></span>
<span class="t" style="left:280.3px;top:675.1px;font-size:13px;color:#3a3a3a"><i style="letter-spacing:-0.86px">CVE</i><b>漏洞监控</b></span>
<span class="t" style="left:425.3px;top:675.1px;font-size:13px;color:#3a3a3a"><i style="letter-spacing:0.19px">Termin</i><i style="letter-spacing:0.09px">atorZ</i></span>
<span class="t" style="left:724.3px;top:675.1px;font-size:13px;color:#3a3a3a"><i style="letter-spacing:0.30px">https</i><i style="letter-spacing:0.39px">://gi</i><i style="letter-spacing:0.14px">thub</i><i style="letter-spacing:0.53px">.com/</i><i style="letter-spacing:0.12px">black</i><i style="letter-spacing:0.14px">hatet</i><i style="letter-spacing:0.12px">hical</i><i style="letter-spacing:0.09px">hacki</i><i style="letter-spacing:0.40px">ng/T</i><i style="letter-spacing:0.11px">ermin</i><i style="letter-spacing:0.09px">atorZ</i></span>
<span class="t" style="left:1370.0px;top:675.1px;font-size:13px;color:#3a3a3a"><i style="letter-spacing:0.08px">2023</i><b>年</b><i style="letter-spacing:0.08px">9</i><b>月</b><i style="letter-spacing:0.08px">24</i><b>日</b><i style="letter-spacing:-0.09px"> 10:50</i></span>
<span class="t" style="left:1568.5px;top:675.5px;font-size:13px;color:#fff;font-weight:700">查看</span>
<span class="t" style="left:77.3px;top:728.1px;font-size:13px;color:#4a93e6;font-weight:700"><i style="letter-spacing:-0.59px">Bored</i><i style="letter-spacing:-0.31px">Hacke</i><i style="letter-spacing:-0.54px">rBlog</i></span>
<span class="t" style="left:280.3px;top:728.1px;font-size:13px;color:#3a3a3a"><i style="letter-spacing:-0.86px">CVE</i><b>漏洞监控</b></span>
<span class="t" style="left:425.3px;top:728.1px;font-size:13px;color:#3a3a3a"><i style="letter-spacing:0.05px">winra</i><i style="letter-spacing:-0.78px">r_CVE</i><i style="letter-spacing:-0.08px">-2023</i><i style="letter-spacing:-0.08px">-3883</i><i style="letter-spacing:-0.24px">1_laz</i><i style="letter-spacing:-0.23px">y_poc</i></span>
<span class="t" style="left:724.3px;top:728.1px;font-size:13px;color:#3a3a3a"><i style="letter-spacing:0.30px">https</i><i style="letter-spacing:0.39px">://gi</i><i style="letter-spacing:0.08px">thub.</i><i style="letter-spacing:0.45px">com/B</i><i style="letter-spacing:-0.04px">oredH</i><i style="letter-spacing:-0.03px">acker</i><i style="letter-spacing:0.34px">Blog/</i><i style="letter-spacing:0.05px">winra</i><i style="letter-spacing:-0.78px">r_CVE</i><i style="letter-spacing:-0.08px">-2023</i><i style="letter-spacing:-0.08px">-3883</i><i style="letter-spacing:-0.24px">1_laz</i><i style="letter-spacing:-0.23px">y_poc</i></span>
<span class="t" style="left:1370.0px;top:728.1px;font-size:13px;color:#3a3a3a"><i style="letter-spacing:0.08px">2023</i><b>年</b><i style="letter-spacing:0.08px">9</i><b>月</b><i style="letter-spacing:0.08px">24</i><b>日</b><i style="letter-spacing:-0.09px"> 10:50</i></span>
<span class="t" style="left:1568.5px;top:728.5px;font-size:13px;color:#fff;font-weight:700">查看</span>
<span class="t" style="left:77.3px;top:781.1px;font-size:13px;color:#4a93e6;font-weight:700;letter-spacing:-0.04px">0xf15h</span>
<span class="t" style="left:280.3px;top:781.1px;font-size:13px;color:#3a3a3a"><i style="letter-spacing:-0.86px">CVE</i><b>漏洞监控</b></span>
<span class="t" style="left:425.3px;top:781.1px;font-size:13px;color:#3a3a3a;letter-spacing:0.01px">mtk_su</span>
<span class="t" style="left:724.3px;top:781.1px;font-size:13px;color:#3a3a3a"><i style="letter-spacing:0.30px">https</i><i style="letter-spacing:0.43px">://git</i><i style="letter-spacing:0.01px">hub.c</i><i style="letter-spacing:0.51px">om/0x</i><i style="letter-spacing:0.55px">f15h/m</i><i style="letter-spacing:-0.10px">tk_su</i></span>
<span class="t" style="left:1370.0px;top:781.1px;font-size:13px;color:#3a3a3a"><i style="letter-spacing:0.08px">2023</i><b>年</b><i style="letter-spacing:0.08px">9</i><b>月</b><i style="letter-spacing:0.08px">24</i><b>日</b><i style="letter-spacing:-0.09px"> 10:50</i></span>
<span class="t" style="left:1568.5px;top:781.5px;font-size:13px;color:#fff;font-weight:700">查看</span>
<span class="t" style="left:77.3px;top:834.1px;font-size:13px;color:#4a93e6;font-weight:700"><i style="letter-spacing:-0.14px">klez</i><i style="letter-spacing:-0.33px">Virus</i></span>
<span class="t" style="left:280.3px;top:834.1px;font-size:13px;color:#3a3a3a"><i style="letter-spacing:-1.19px">RCE</i><b>漏洞监控</b><i style="letter-spacing:0.08px">01</i></span>
<span class="t" style="left:425.3px;top:834.1px;font-size:13px;color:#3a3a3a"><i style="letter-spacing:-0.65px">CVE-2</i><i style="letter-spacing:-0.13px">021-</i><i style="letter-spacing:0.07px">40444</i></span>
<span class="t" style="left:724.3px;top:834.1px;font-size:13px;color:#3a3a3a"><i style="letter-spacing:0.30px">https</i><i style="letter-spacing:0.39px">://gi</i><i style="letter-spacing:0.14px">thub</i><i style="letter-spacing:0.53px">.com/</i><i style="letter-spacing:-0.08px">klezV</i><i style="letter-spacing:0.45px">irus/</i><i style="letter-spacing:-0.83px">CVE-</i><i style="letter-spacing:-0.08px">2021-</i><i style="letter-spacing:0.07px">40444</i></span>
<span class="t" style="left:1370.0px;top:834.1px;font-size:13px;color:#3a3a3a"><i style="letter-spacing:0.08px">2023</i><b>年</b><i style="letter-spacing:0.08px">9</i><b>月</b><i style="letter-spacing:0.08px">24</i><b>日</b><i style="letter-spacing:-0.09px"> 10:50</i></span>
<span class="t" style="left:1568.5px;top:834.5px;font-size:13px;color:#fff;font-weight:700">查看</span>
<span class="t" style="left:77.3px;top:887.1px;font-size:13px;color:#4a93e6;font-weight:700"><i style="letter-spacing:-0.33px">horiz</i><i style="letter-spacing:-0.30px">on3ai</i></span>
<span class="t" style="left:280.3px;top:887.1px;font-size:13px;color:#3a3a3a"><i style="letter-spacing:-0.86px">CVE</i><b>漏洞监控</b></span>
<span class="t" style="left:425.3px;top:887.1px;font-size:13px;color:#3a3a3a"><i style="letter-spacing:-0.65px">CVE-2</i><i style="letter-spacing:-0.13px">023-</i><i style="letter-spacing:0.07px">27524</i></span>
<span class="t" style="left:724.3px;top:887.1px;font-size:13px;color:#3a3a3a"><i style="letter-spacing:0.30px">https</i><i style="letter-spacing:0.39px">://gi</i><i style="letter-spacing:0.08px">thub.</i><i style="letter-spacing:0.55px">com/h</i><i style="letter-spacing:0.12px">oriz</i><i style="letter-spacing:0.07px">on3ai</i><i style="letter-spacing:-0.32px">/CVE-</i><i style="letter-spacing:-0.08px">2023-</i><i style="letter-spacing:0.07px">27524</i></span>
<span class="t" style="left:1370.0px;top:887.1px;font-size:13px;color:#3a3a3a"><i style="letter-spacing:0.08px">2023</i><b>年</b><i style="letter-spacing:0.08px">9</i><b>月</b><i style="letter-spacing:0.08px">24</i><b>日</b><i style="letter-spacing:-0.09px"> 10:50</i></span>
<span class="t" style="left:1568.5px;top:887.5px;font-size:13px;color:#fff;font-weight:700">查看</span>
<span class="t" style="left:1604.5px;top:867.3px;font-size:18px;color:#fff;font-weight:700;z-index:9;text-shadow:0 0 3px rgba(255,255,255,.6)">凡浅笔记</span>
</body>
</html>
